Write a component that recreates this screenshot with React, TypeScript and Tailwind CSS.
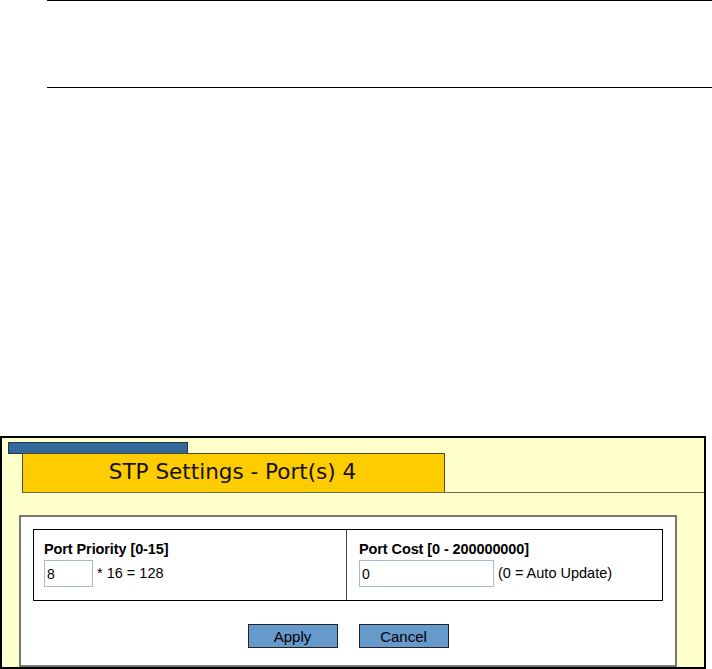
import React from 'react';

export default function App() {
  return (
    <div className="w-[712px] h-[669px] bg-white overflow-hidden relative" style={{ fontFamily: '"Liberation Sans", Arial, sans-serif' }}>
      {/* top rule block */}
      <div className="ml-[47px] h-[88px] border-t border-b border-black" />

      {/* STP panel */}
      <div className="mt-[348px] w-[706px] h-[233px] border-2 border-black bg-[#ffffcc] pt-[4px] pl-[6px]">
        <div className="w-[180px] h-[12px] bg-[#336699] border border-[#1f3a55]" />
        <div className="ml-[14px] flex border-b border-[#6b6b55]">
          <div className="w-[423px] h-[39px] -mt-px bg-[#ffcc00] border border-[#4a4a2a] border-b-0 flex items-center justify-center pb-[2px] pr-[2px] text-[21.5px] text-[#111]" style={{ fontFamily: '"DejaVu Sans", Verdana, sans-serif' }}>
            STP Settings - Port(s) 4
          </div>
        </div>

        <div className="mt-[22px] ml-[11px] w-[658px] h-[152px] bg-white border-2 border-[#7a7a70] p-[12px]">
          <div className="flex h-[72px] border border-black">
            <div className="w-[313px] border-r border-[#444] pl-[10px] pt-[11px]">
              <div className="text-[14.5px] leading-[17px] font-bold text-black tracking-[-0.1px]">Port Priority [0-15]</div>
              <div className="flex items-center mt-[2px]">
                <input defaultValue="8" className="w-[49px] h-[27px] border border-[#a5b9d0] px-[2px] text-[14px] text-black outline-none" />
                <span className="ml-[4px] text-[14.5px] text-black">* 16 = 128</span>
              </div>
            </div>
            <div className="flex-1 pl-[12px] pt-[11px]">
              <div className="text-[14.5px] leading-[17px] font-bold text-black tracking-[-0.1px]">Port Cost [0 - 200000000]</div>
              <div className="flex items-center mt-[2px]">
                <input defaultValue="0" className="w-[135px] h-[27px] border border-[#a5b9d0] px-[2px] text-[14px] text-black outline-none" />
                <span className="ml-[4px] text-[14.5px] text-black">(0 = Auto Update)</span>
              </div>
            </div>
          </div>
          <div className="flex justify-center gap-[21px] mt-[23px]">
            <button className="w-[90px] h-[24px] bg-[#6699cc] border border-[#222] text-[15px] text-black leading-none">Apply</button>
            <button className="w-[90px] h-[24px] bg-[#6699cc] border border-[#222] text-[15px] text-black leading-none">Cancel</button>
          </div>
        </div>
      </div>
    </div>
  );
}
